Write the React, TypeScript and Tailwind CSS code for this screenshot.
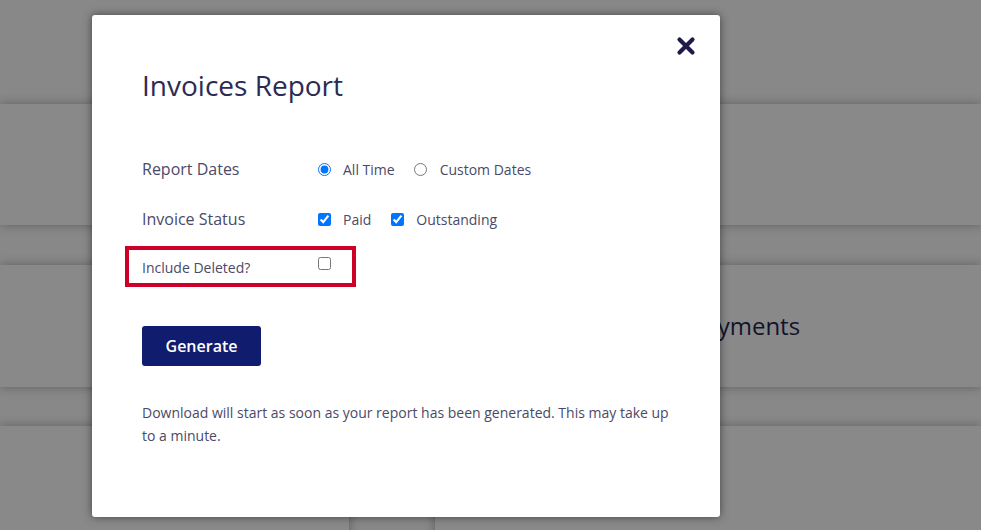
import React from "react";

function Card({ className = "", children }: { className?: string; children?: React.ReactNode }) {
  return (
    <div className={`bg-[#898989] shadow-[0_0_10px_rgba(0,0,0,0.3)] flex items-center justify-center ${className}`}>
      {children}
    </div>
  );
}

export default function App() {
  return (
    <div className="relative h-[530px] w-[981px] overflow-hidden bg-[#888888] font-['Open_Sans',sans-serif]">
      <div className="flex flex-col gap-[40px] pt-[104px]">
        <Card className="h-[121px]" />
        <Card className="h-[122px] pl-[309px] text-[24px] text-[#12142c]">
          <span className="ml-[200px]">Payments</span>
        </Card>
        <div className="-mt-[1px] flex h-[140px] gap-[86px]">
          <Card className="w-[349px]" />
          <Card className="flex-1" />
        </div>
      </div>

      <div className="absolute left-[92px] top-[15px] h-[502px] w-[628px] rounded-[3px] bg-white pl-[50px] pr-[44px] pt-[51px] shadow-[0_0_8px_rgba(0,0,0,0.5)]">
        <button className="absolute right-[24px] top-[21px] text-[#1d1b4b]" aria-label="Close">
          <svg width="20" height="20" viewBox="0 0 20 20">
            <path d="M3.5 3.5 L16.5 16.5 M16.5 3.5 L3.5 16.5" stroke="currentColor" strokeWidth="4.2" strokeLinecap="round" />
          </svg>
        </button>

        <h1 className="text-[28px] leading-[38px] text-[#2b2b55]">Invoices Report</h1>

        <div className="mt-[53px] flex h-[24px] items-center">
          <span className="w-[176px] text-[16px] text-[#4a4a68]">Report Dates</span>
          <input type="radio" name="dates" defaultChecked />
          <span className="ml-[12px] text-[14px] text-[#4a4a68]">All Time</span>
          <input type="radio" name="dates" className="ml-[19px]" />
          <span className="ml-[13px] text-[14px] text-[#4a4a68]">Custom Dates</span>
        </div>

        <div className="mt-[26px] flex h-[24px] items-center">
          <span className="w-[176px] text-[16px] text-[#4a4a68]">Invoice Status</span>
          <input type="checkbox" defaultChecked />
          <span className="ml-[12px] text-[14px] text-[#4a4a68]">Paid</span>
          <input type="checkbox" defaultChecked className="ml-[20px]" />
          <span className="ml-[12px] text-[14px] text-[#4a4a68]">Outstanding</span>
        </div>

        <div className="-ml-[17px] mt-[15px] flex h-[41px] w-[231px] items-center border-[4px] border-[#cc0029] pl-[13px]">
          <span className="mt-[2px] w-[176px] text-[14px] text-[#4a4a68]">Include Deleted?</span>
          <input type="checkbox" className="-mt-[7px]" />
        </div>

        <button className="mt-[39px] block h-[40px] w-[119px] rounded-[3px] bg-[#101c6e] text-[16px] font-semibold text-white">
          Generate
        </button>

        <p className="mt-[35px] text-[14px] leading-[23px] text-[#4a4a68]">
          Download will start as soon as your report has been generated. This may take up to a minute.
        </p>
      </div>
    </div>
  );
}
